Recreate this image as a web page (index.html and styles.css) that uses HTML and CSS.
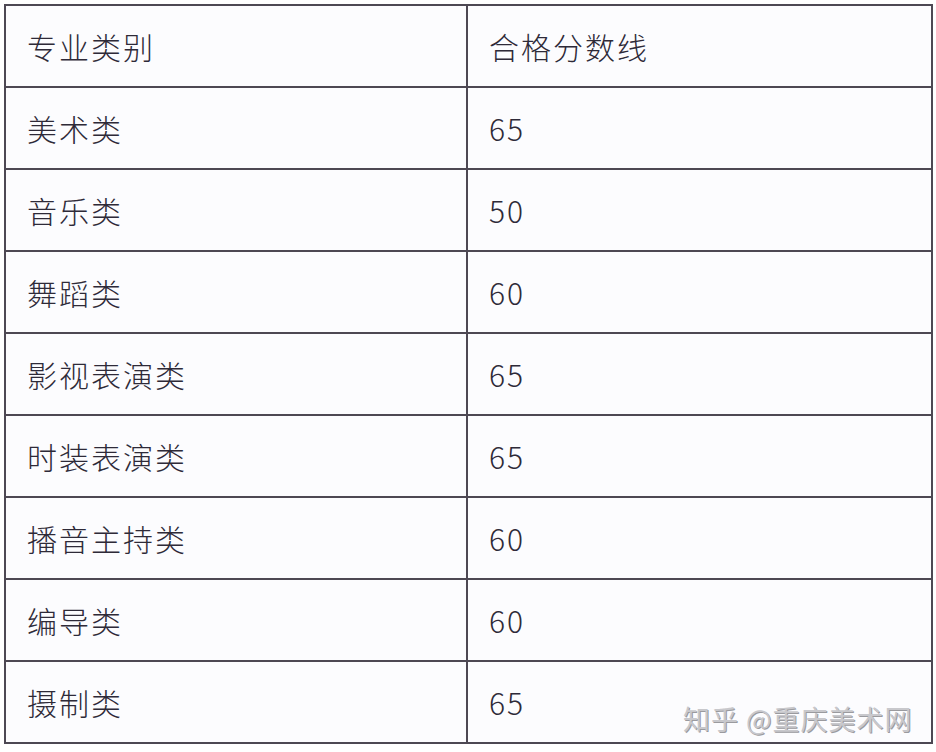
FILE: index.html
```html
<!DOCTYPE html>
<html lang="zh-CN">
<head>
<meta charset="utf-8">
<link rel="stylesheet" href="styles.css">
</head>
<body>
<div class="page">
  <table class="score-table">
    <colgroup><col class="col-a"><col class="col-b"></colgroup>
    <tr><td>专业类别</td><td>合格分数线</td></tr>
    <tr><td>美术类</td><td>65</td></tr>
    <tr><td>音乐类</td><td>50</td></tr>
    <tr><td>舞蹈类</td><td>60</td></tr>
    <tr><td>影视表演类</td><td>65</td></tr>
    <tr><td>时装表演类</td><td>65</td></tr>
    <tr><td>播音主持类</td><td>60</td></tr>
    <tr><td>编导类</td><td>60</td></tr>
    <tr><td>摄制类</td><td>65</td></tr>
  </table>
  <div class="watermark">知乎 @重庆美术网</div>
</div>
</body>
</html>
```

FILE: styles.css
```css
html, body {
  margin: 0;
  padding: 0;
  background: #ffffff;
}
.page {
  position: relative;
  width: 936px;
  height: 752px;
  padding: 4px 0 0 4px;
  box-sizing: border-box;
}
.score-table {
  border-collapse: collapse;
  table-layout: fixed;
  width: 927px;
  background: #fcfcfe;
  font-family: "Noto Sans CJK SC", "Noto Sans", sans-serif;
  font-weight: 300;
  font-size: 30px;
  letter-spacing: 2px;
  color: #2e2a38;
}
.col-a { width: 462px; }
.col-b { width: 465px; }
.score-table td {
  border: 2px solid #4d4853;
  height: 82px;
  padding: 0 0 0 21px;
  box-sizing: border-box;
  vertical-align: middle;
  line-height: 1;
}
.watermark {
  position: absolute;
  left: 683px;
  top: 699px;
  font-family: "Noto Sans CJK SC", sans-serif;
  font-size: 27px;
  color: #c8c8cc;
  letter-spacing: 1px;
  text-shadow: 1px 1px 0 #9a9a9e;
  white-space: nowrap;
}
```
